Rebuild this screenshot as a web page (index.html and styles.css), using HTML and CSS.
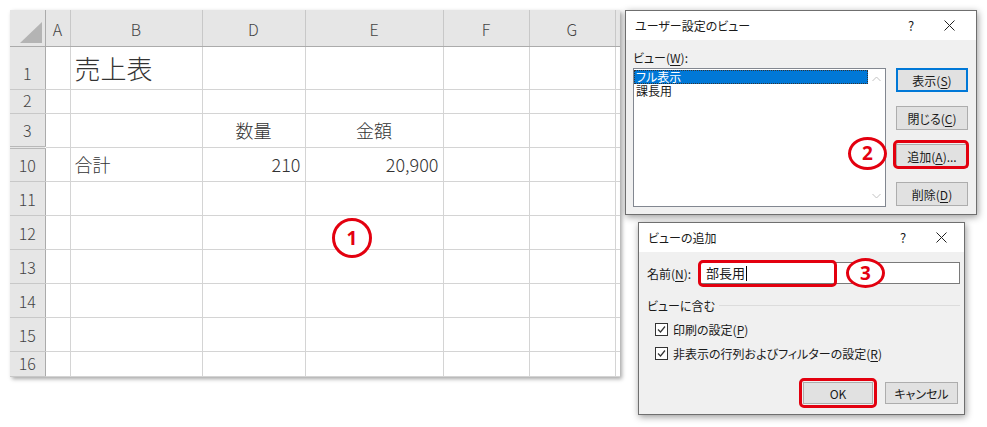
FILE: index.html
```html
<!DOCTYPE html>
<html lang="ja">
<head>
  <meta charset="UTF-8" />
  <meta name="viewport" content="width=device-width, initial-scale=1.0"/>
  <title>ユーザー設定のビュー</title>
  <link rel="stylesheet" href="styles.css">
</head>
<body>
  <div class="desk">

    <table class="sheet">
      <colgroup>
        <col class="w-hd"><col class="w-a"><col class="w-b"><col class="w-d"><col class="w-e"><col class="w-f"><col class="w-g"><col class="w-rest">
      </colgroup>
      <tr class="h-head">
        <th class="corner"><span class="tri"></span></th>
        <th class="col">A</th><th class="col">B</th><th class="col">D</th><th class="col">E</th><th class="col">F</th><th class="col">G</th><th class="col end"></th>
      </tr>
      <tr class="h-1">
        <th class="row">1</th><td></td><td class="big">売上表</td><td></td><td></td><td></td><td></td><td class="end"></td>
      </tr>
      <tr class="h-2">
        <th class="row">2</th><td></td><td></td><td></td><td></td><td></td><td></td><td class="end"></td>
      </tr>
      <tr class="h-n">
        <th class="row">3</th><td></td><td></td><td class="mid">数量</td><td class="mid">金額</td><td></td><td></td><td class="end"></td>
      </tr>
      <tr class="h-n">
        <th class="row gap">10</th><td></td><td>合計</td><td class="num">210</td><td class="num">20,900</td><td></td><td></td><td class="end"></td>
      </tr>
      <tr class="h-n">
        <th class="row">11</th><td></td><td></td><td></td><td></td><td></td><td></td><td class="end"></td>
      </tr>
      <tr class="h-n">
        <th class="row">12</th><td></td><td></td><td></td><td></td><td></td><td></td><td class="end"></td>
      </tr>
      <tr class="h-n">
        <th class="row">13</th><td></td><td></td><td></td><td></td><td></td><td></td><td class="end"></td>
      </tr>
      <tr class="h-n">
        <th class="row">14</th><td></td><td></td><td></td><td></td><td></td><td></td><td class="end"></td>
      </tr>
      <tr class="h-n">
        <th class="row">15</th><td></td><td></td><td></td><td></td><td></td><td></td><td class="end"></td>
      </tr>
      <tr class="h-last">
        <th class="row">16</th><td></td><td></td><td></td><td></td><td></td><td></td><td class="end"></td>
      </tr>
    </table>

    <!-- ユーザー設定のビュー -->
    <div class="dlg dlg-views">
      <div class="dlg-title">
        <span class="dlg-name">ユーザー設定のビュー</span>
        <span class="help">?</span>
        <span class="close">
          <svg width="11" height="11" viewBox="0 0 11 11"><path d="M0.5 0.5L10.5 10.5M10.5 0.5L0.5 10.5" stroke="#222" stroke-width="1"/></svg>
        </span>
      </div>
      <div class="dlg-body">
        <div class="lbl">ビュー(<u>W</u>):</div>
        <div class="views-row">
          <div class="listbox">
            <div class="items">
              <div class="item sel">フル表示</div>
              <div class="item">課長用</div>
            </div>
            <div class="vscroll">
              <svg width="9" height="6" viewBox="0 0 9 6"><path d="M0.5 5L4.5 1L8.5 5" fill="none" stroke="#c2c2c2" stroke-width="1"/></svg>
              <svg width="9" height="6" viewBox="0 0 9 6"><path d="M0.5 1L4.5 5L8.5 1" fill="none" stroke="#c2c2c2" stroke-width="1"/></svg>
            </div>
          </div>
          <div class="btn-col">
            <button class="btn def">表示(<u>S</u>)</button>
            <button class="btn">閉じる(<u>C</u>)</button>
            <button class="btn">追加(<u>A</u>)...</button>
            <button class="btn">削除(<u>D</u>)</button>
          </div>
        </div>
      </div>
    </div>

    <!-- ビューの追加 -->
    <div class="dlg dlg-add">
      <div class="dlg-title">
        <span class="dlg-name">ビューの追加</span>
        <span class="help">?</span>
        <span class="close">
          <svg width="11" height="11" viewBox="0 0 11 11"><path d="M0.5 0.5L10.5 10.5M10.5 0.5L0.5 10.5" stroke="#222" stroke-width="1"/></svg>
        </span>
      </div>
      <div class="dlg-body">
        <div class="name-row">
          <span class="name-lbl">名前(<u>N</u>):</span>
          <div class="textbox">部長用<span class="caret"></span></div>
        </div>
        <div class="grp">ビューに含む</div>
        <label class="chk">
          <svg width="13" height="13" viewBox="0 0 13 13"><rect x="0.5" y="0.5" width="12" height="12" fill="#fff" stroke="#333"/><path d="M3 6.5L5.5 9L10 3.5" fill="none" stroke="#333" stroke-width="1.2"/></svg>
          <span>印刷の設定(<u>P</u>)</span>
        </label>
        <label class="chk">
          <svg width="13" height="13" viewBox="0 0 13 13"><rect x="0.5" y="0.5" width="12" height="12" fill="#fff" stroke="#333"/><path d="M3 6.5L5.5 9L10 3.5" fill="none" stroke="#333" stroke-width="1.2"/></svg>
          <span>非表示の行列およびフィルターの設定(<u>R</u>)</span>
        </label>
        <div class="foot">
          <button class="btn ok">OK</button>
          <button class="btn cancel">キャンセル</button>
        </div>
      </div>
    </div>

    <!-- 注釈（赤枠・丸数字） -->
    <span class="hl hl-add"></span>
    <span class="hl hl-name"></span>
    <span class="hl hl-ok"></span>
    <span class="mark mark-1">1</span>
    <span class="mark mark-2">2</span>
    <span class="mark mark-3">3</span>
  </div>
</body>
</html>
```

FILE: styles.css
```css
body {
  margin: 0;
  background-color: #fff;
  font-family: "Noto Sans CJK JP", "Noto Sans", sans-serif;
  color: #222;
}
.desk {
  position: relative;
  width: 987px;
  height: 427px;
  overflow: hidden;
}

/* シート */
.sheet {
  border-collapse: collapse;
  table-layout: fixed;
  width: 610px;
  margin: 10px 0 0 10px;
  background-color: #fff;
  box-shadow: 2px 2px 4px rgba(0,0,0,0.35);
  font-size: 18px;
  font-weight: 300;
  color: #333;
  line-height: 1.2;
}
.w-hd { width: 35px; }
.w-a { width: 25px; }
.w-b { width: 132px; }
.w-d { width: 103px; }
.w-e { width: 138px; }
.w-f { width: 86px; }
.w-g { width: 86px; }
.w-rest { width: 5px; }
.sheet td, .sheet th {
  border: 1px solid #d4d4d4;
  padding: 0 4px 5px 4px;
  vertical-align: bottom;
  white-space: nowrap;
}
.sheet td { overflow: hidden; }
.h-head { height: 36px; }
.h-1 { height: 43px; }
.h-2 { height: 24px; }
.h-n { height: 34px; }
.h-last { height: 25px; }
.sheet th {
  background-color: #e6e6e6;
  color: #444;
  font-size: 16px;
  font-weight: 300;
}
.sheet .col {
  border-top: none;
  border-bottom-color: #ababab;
  border-left-color: #c8c8c8;
  border-right-color: #c8c8c8;
  text-align: center;
  padding-bottom: 6px;
}
.sheet .row {
  border-left: none;
  border-right-color: #ababab;
  border-top-color: #c8c8c8;
  border-bottom-color: #c8c8c8;
  text-align: center;
  padding: 0 0 5px 0;
}
.sheet .h-2 .row,
.sheet .h-last .row {
  padding-bottom: 2px;
}
.sheet .row.gap {
  border-top: 3px double #b8b8b8;
}
.sheet .corner {
  border: none;
  border-right: 1px solid #ababab;
  border-bottom: 1px solid #ababab;
  text-align: right;
  padding: 0 3px 3px 0;
  line-height: 0;
}
.tri {
  display: inline-block;
  width: 0;
  height: 0;
  border-left: 22px solid transparent;
  border-bottom: 21px solid #b4b4b4;
}
.sheet .end {
  border-right: none;
  background-color: #fff;
}
.sheet th.end {
  background-color: #e6e6e6;
}
.sheet .big {
  font-size: 26px;
  padding-bottom: 5px;
}
.sheet .mid { text-align: center; }
.sheet .num { text-align: right; }

/* ダイアログ */
.dlg {
  position: absolute;
  box-sizing: border-box;
  border: 1px solid #6f6f6f;
  background-color: #f0f0f0;
  box-shadow: 1px 2px 7px rgba(0,0,0,0.4);
  font-size: 12px;
  font-feature-settings: "palt";
  color: #1a1a1a;
}
.dlg-views {
  left: 625px;
  top: 10px;
  width: 352px;
  height: 205px;
}
.dlg-add {
  left: 638px;
  top: 222px;
  width: 327px;
  height: 193px;
}
.dlg-title {
  display: flex;
  align-items: center;
  height: 29px;
  padding-left: 9px;
  background-color: #fff;
  font-size: 12px;
}
.dlg-views .dlg-title { padding-right: 4px; }
.dlg-add .dlg-title { padding-right: 0; }
.dlg-name { flex: 1; }
.help {
  width: 30px;
  text-align: center;
  font-size: 13px;
}
.close {
  width: 46px;
  display: flex;
  justify-content: center;
}
.dlg u { text-decoration-thickness: 1px; text-underline-offset: 2px; }

.dlg-views .dlg-body {
  padding: 10px 8px 0 7px;
}
.lbl {
  height: 16px;
  line-height: 16px;
  margin-bottom: 2px;
}
.views-row {
  display: flex;
  gap: 10px;
}
.listbox {
  display: flex;
  box-sizing: border-box;
  width: 253px;
  height: 139px;
  border: 1px solid #828790;
  background-color: #fff;
}
.items {
  flex: 1;
  padding: 1px 0 0 0;
}
.item {
  height: 14px;
  line-height: 14px;
  padding-left: 2px;
}
.item.sel {
  background-color: #0078d7;
  color: #fff;
  outline: 1px dotted #333;
  outline-offset: -1px;
}
.vscroll {
  width: 17px;
  display: flex;
  flex-direction: column;
  justify-content: space-between;
  align-items: center;
  padding: 7px 0 7px 0;
}
.btn-col {
  display: flex;
  flex-direction: column;
  gap: 14px;
}
.btn {
  box-sizing: border-box;
  width: 72px;
  height: 24px;
  padding: 0;
  border: 1px solid #adadad;
  background-color: #e1e1e1;
  font-family: inherit;
  font-size: 12px;
  font-feature-settings: "palt";
  color: #1a1a1a;
}
.btn.def {
  border: 2px solid #0078d7;
}

.dlg-add .dlg-body {
  padding: 10px 4px 0 8px;
}
.name-row {
  display: flex;
  align-items: center;
  height: 22px;
}
.name-lbl {
  width: 53px;
}
.textbox {
  flex: 1;
  box-sizing: border-box;
  height: 22px;
  line-height: 20px;
  padding-left: 5px;
  border: 1px solid #7a7a7a;
  background-color: #fff;
  font-size: 13px;
}
.caret {
  display: inline-block;
  width: 1px;
  height: 15px;
  margin-left: 1px;
  vertical-align: -3px;
  background-color: #000;
}
.grp {
  display: flex;
  align-items: center;
  gap: 4px;
  height: 14px;
  margin-top: 14px;
  margin-bottom: 5px;
}
.grp::after {
  content: "";
  flex: 1;
  border-top: 1px solid #dcdcdc;
}
.chk {
  display: flex;
  align-items: center;
  gap: 5px;
  height: 24px;
  padding-left: 8px;
}
.foot {
  display: flex;
  justify-content: flex-end;
  gap: 12px;
  margin-top: 17px;
  padding-right: 2px;
}
.foot .btn {
  height: 22px;
}
.btn.ok { width: 70px; }
.btn.cancel { width: 73px; }

/* 注釈（赤枠・丸数字） */
.hl {
  position: absolute;
  box-sizing: border-box;
  border: 3px solid #e3000f;
  border-radius: 5px;
}
.hl-add { left: 893px; top: 140px; width: 76px; height: 29px; }
.hl-name { left: 698px; top: 260px; width: 139px; height: 27px; }
.hl-ok { left: 799px; top: 378px; width: 78px; height: 30px; }
.mark {
  position: absolute;
  box-sizing: border-box;
  display: flex;
  align-items: center;
  justify-content: center;
  border: 3px solid #e3000f;
  border-radius: 50%;
  background-color: #fff;
  color: #e3000f;
  font-family: "Noto Sans", sans-serif;
  font-weight: bold;
  font-size: 19px;
  line-height: 1;
}
.mark-1 { left: 332px; top: 218px; width: 40px; height: 40px; }
.mark-2 { left: 848px; top: 137px; width: 39px; height: 33px; }
.mark-3 { left: 846px; top: 258px; width: 39px; height: 30px; }
```
